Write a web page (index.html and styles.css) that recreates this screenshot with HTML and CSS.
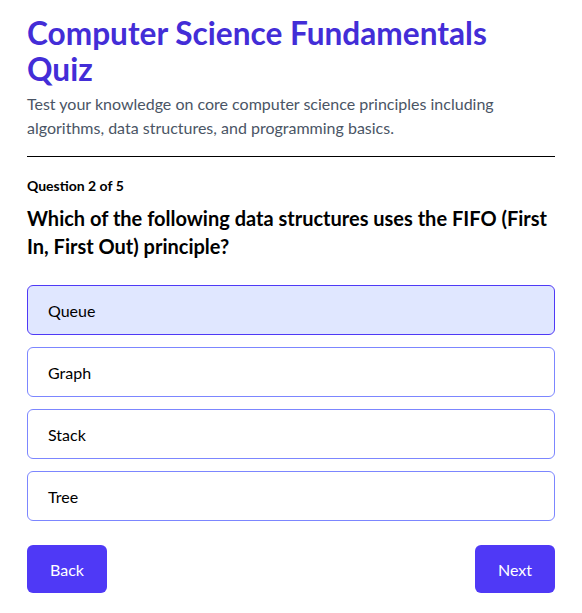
FILE: index.html
```html
<!DOCTYPE html>
<html lang="en">
<head>
<meta charset="utf-8">
<title>Computer Science Fundamentals Quiz</title>
<link rel="stylesheet" href="styles.css">
</head>
<body>
<main class="quiz">
  <header class="quiz-header">
    <h1 class="quiz-title">Computer Science Fundamentals Quiz</h1>
    <p class="quiz-desc">Test your knowledge on core computer science principles including algorithms, data structures, and programming basics.</p>
  </header>
  <section class="question">
    <div class="q-count">Question 2 of 5</div>
    <h2 class="q-text">Which of the following data structures uses the FIFO (First In, First Out) principle?</h2>
    <div class="options">
      <button class="option selected">Queue</button>
      <button class="option">Graph</button>
      <button class="option">Stack</button>
      <button class="option">Tree</button>
    </div>
  </section>
  <nav class="nav">
    <button class="btn">Back</button>
    <button class="btn">Next</button>
  </nav>
</main>
</body>
</html>
```

FILE: styles.css
```css
* { box-sizing: border-box; }
html, body { margin: 0; padding: 0; background: #fff; }
body {
  font-family: "Lato", "Noto Sans", sans-serif;
  color: #000;
}
.quiz {
  padding: 15px 27px 20px 27px;
}
.quiz-header {
  border-bottom: 1px solid #000;
  padding-bottom: 16px;
}
.quiz-title {
  margin: 0;
  font-size: 31.6px;
  line-height: 36px;
  font-weight: 700;
  color: #432dd7;
}
.quiz-desc {
  margin: 5px 0 0 0;
  font-size: 16px;
  line-height: 24px;
  color: #4a5565;
}
.question {
  padding-top: 19px;
}
.q-count {
  font-size: 14px;
  line-height: 20px;
  font-weight: 700;
}
.q-text {
  margin: 8px 0 0 0;
  font-size: 20px;
  line-height: 28px;
  font-weight: 700;
}
.options {
  margin-top: 25px;
  display: flex;
  flex-direction: column;
  gap: 12px;
}
.option {
  display: block;
  width: 100%;
  height: 50px;
  text-align: left;
  padding: 0 20px;
  font-family: inherit;
  font-size: 16px;
  color: #000;
  background: #fff;
  border: 1px solid #7c86ff;
  border-radius: 6px;
}
.option.selected {
  background: #e0e7ff;
  border-color: #4f39f6;
}
.nav {
  margin-top: 24px;
  display: flex;
  justify-content: space-between;
}
.btn {
  height: 48px;
  padding: 0 23px;
  font-family: inherit;
  font-size: 16px;
  color: #fff;
  background: #4f39f6;
  border: none;
  border-radius: 6px;
}
```
